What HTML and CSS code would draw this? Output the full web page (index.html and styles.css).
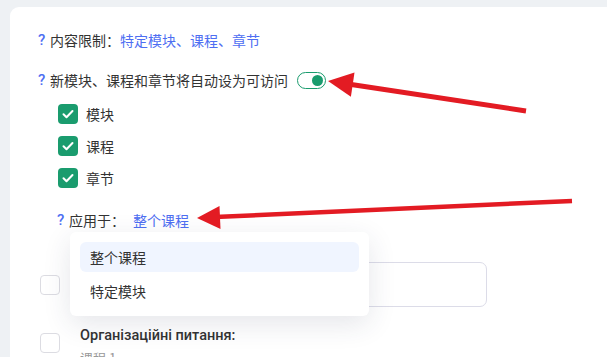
FILE: index.html
```html
<!DOCTYPE html>
<html lang="zh-CN">
  <head>
    <meta charset="UTF-8" />
    <meta name="viewport" content="width=device-width, initial-scale=1.0" />
    <title>访问设置</title>
    <link rel="stylesheet" href="styles.css">
  </head>
  <body>
    <div class="card">
      <div class="row">
        <span class="hint">?</span>
        <span>内容限制：</span>
        <a class="link" href="#">特定模块、课程、章节</a>
      </div>

      <div class="row row-auto">
        <span class="hint">?</span>
        <span>新模块、课程和章节将自动设为可访问</span>
        <span class="toggle"><span class="knob"></span></span>
      </div>

      <div class="checks">
        <label class="check"><span class="box checked"><svg viewBox="0 0 20 20" width="20" height="20"><path d="M5.5 10.3l3 3 6-6.3" fill="none" stroke="#fff" stroke-width="2" stroke-linecap="round" stroke-linejoin="round"/></svg></span>模块</label>
        <label class="check"><span class="box checked"><svg viewBox="0 0 20 20" width="20" height="20"><path d="M5.5 10.3l3 3 6-6.3" fill="none" stroke="#fff" stroke-width="2" stroke-linecap="round" stroke-linejoin="round"/></svg></span>课程</label>
        <label class="check"><span class="box checked"><svg viewBox="0 0 20 20" width="20" height="20"><path d="M5.5 10.3l3 3 6-6.3" fill="none" stroke="#fff" stroke-width="2" stroke-linecap="round" stroke-linejoin="round"/></svg></span>章节</label>
      </div>

      <div class="row row-apply">
        <span class="hint">?</span>
        <span>应用于：</span>
        <a class="link apply-link" href="#">整个课程</a>

        <!-- dropdown -->
        <div class="menu">
          <div class="menu-item active">整个课程</div>
          <div class="menu-item">特定模块</div>
        </div>
      </div>

      <div class="items">
        <div class="item item-input">
          <span class="box"></span>
          <div class="field"></div>
        </div>
        <div class="item item-title">
          <span class="box"></span>
          <div>
            <div class="item-name">Організаційні питання:</div>
            <div class="item-sub">课程 1</div>
          </div>
        </div>
      </div>
    </div>

    <!-- annotation arrows -->
    <svg class="arrows" width="607" height="357" viewBox="0 0 607 357">
      <line x1="526" y1="111" x2="348" y2="84" stroke="#e31b23" stroke-width="5" />
      <polygon points="328,81 354.5,72.5 350.9,96.8" fill="#e31b23" />
      <line x1="572" y1="201" x2="215" y2="217" stroke="#e31b23" stroke-width="4.5" />
      <polygon points="197,218 219.5,206 220.5,229" fill="#e31b23" />
    </svg>
  </body>
</html>
```

FILE: styles.css
```css
body {
  margin: 0;
  background: #eef1f4;
  font-family: "Noto Sans CJK SC", "Noto Sans", sans-serif;
  font-size: 14px;
  color: #333;
  height: 357px;
  overflow: hidden;
  position: relative;
}
.card {
  margin: 7px 0 0 10px;
  padding: 23px 0 0 28px;
  background: #fff;
  border-radius: 9px 0 0 0;
  height: 400px;
}
.row {
  display: flex;
  align-items: center;
  height: 20px;
  line-height: 20px;
  white-space: nowrap;
}
.hint {
  color: #4e6ef2;
  width: 12px;
  font-family: Roboto, sans-serif;
  font-weight: 500;
  font-size: 15px;
}
.link {
  color: #4e6ef2;
  text-decoration: none;
}
.row-auto {
  margin-top: 20px;
}
.toggle {
  display: inline-block;
  position: relative;
  width: 27px;
  height: 15px;
  margin-left: 9px;
  border: 1.5px solid #1a9c6e;
  border-radius: 10px;
  background: #fff;
}
.knob {
  position: absolute;
  right: 2px;
  top: 2px;
  width: 11px;
  height: 11px;
  border-radius: 50%;
  background: #1a9c6e;
}
.checks {
  margin-top: 14px;
  padding-left: 20px;
  display: flex;
  flex-direction: column;
  gap: 12px;
}
.check {
  display: flex;
  align-items: center;
  height: 20px;
  gap: 8px;
}
.box {
  display: inline-block;
  box-sizing: border-box;
  width: 20px;
  height: 20px;
  border: 1px solid #dcdce2;
  border-radius: 4px;
  background: #fff;
  flex-shrink: 0;
}
.box.checked {
  border: none;
  background: #1a9c6e;
}
.box svg {
  display: block;
}
.row-apply {
  margin-top: 22px;
  padding-left: 19px;
  position: relative;
}
.apply-link {
  margin-left: 8px;
}
.menu {
  position: absolute;
  left: 32px;
  top: 22px;
  z-index: 5;
  width: 279px;
  padding: 10px;
  background: #fff;
  border-radius: 6px;
  box-shadow: 0 8px 28px rgba(40, 50, 80, 0.12);
  display: flex;
  flex-direction: column;
  gap: 4px;
}
.menu-item {
  height: 30px;
  line-height: 30px;
  padding-left: 10px;
  border-radius: 6px;
  color: #333;
}
.menu-item.active {
  background: #f0f5ff;
}
.items {
  margin-top: 32px;
  margin-left: 2px;
}
.item {
  display: flex;
  gap: 20px;
}
.item-input {
  align-items: center;
}
.field {
  width: 407px;
  height: 45px;
  box-sizing: border-box;
  border: 1px solid #dcdce8;
  border-radius: 7px;
}
.item-title {
  margin-top: 19px;
  align-items: flex-start;
}
.item-title .box {
  margin-top: 7px;
}
.item-name {
  font-family: Roboto, "Noto Sans", sans-serif;
  font-weight: 500;
  font-size: 14.5px;
  line-height: 20px;
  color: #333;
}
.item-sub {
  font-size: 13px;
  color: #999;
  line-height: 20px;
  margin-top: 2px;
}
.arrows {
  position: absolute;
  left: 0;
  top: 0;
  z-index: 10;
  pointer-events: none;
}
```
